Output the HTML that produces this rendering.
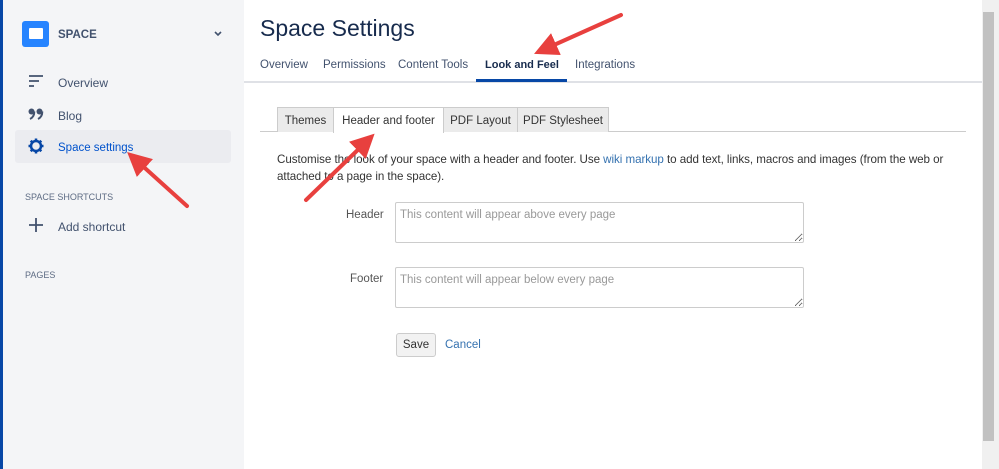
<!DOCTYPE html>
<html><head><style>
*{margin:0;padding:0;box-sizing:border-box}
body{width:999px;height:469px;overflow:hidden;background:#fff;font-family:"Liberation Sans",sans-serif;position:relative;color:#333}
.a{position:absolute;white-space:nowrap}
#side{position:absolute;left:0;top:0;width:244px;height:469px;background:#f4f5f7;border-left:3px solid #0747a6}
.nav{font-size:12px;color:#42526e}
.t{font-size:11.5px;color:#42526e}
.tab{position:absolute;top:107px;height:25px;border:1px solid #ccc;border-bottom:none;background:#ebebeb;font-size:11.5px;color:#333;text-align:center;line-height:27px}
textarea{position:absolute;border:1px solid #ccc;border-radius:2px;font-family:"Liberation Sans",sans-serif;font-size:11.5px;color:#999;padding:6px 4px;resize:both;background:#fff}
</style></head><body>
<div id="side">
  <div class="a" style="left:19px;top:21px;width:27px;height:26px;background:#2684ff;border-radius:3px"></div>
  <div class="a" style="left:26px;top:28px;width:14px;height:11px;background:#fff;border-radius:1px"></div>
  <div class="a" style="left:55px;top:29px;font-size:11.5px;font-weight:bold;color:#42526e">SPACE</div>
  <svg class="a" style="left:211px;top:31px" width="8" height="6"><path d="M1 1l3 3 3-3" stroke="#42526e" stroke-width="1.6" fill="none"/></svg>
  <svg class="a" style="left:25px;top:74px" width="16" height="14"><path d="M1 2h14M1 7h10M1 12h5" stroke="#42526e" stroke-width="1.8"/></svg>
  <div class="a nav" style="left:55px;top:76px">Overview</div>
  <svg class="a" style="left:25px;top:108px" width="16" height="12" viewBox="0 0 16 12"><circle cx="3.5" cy="3.5" r="3" fill="#42526e"/><path d="M6.3 3.5Q6.3 9 2 11" stroke="#42526e" stroke-width="2" fill="none"/><circle cx="11.5" cy="3.5" r="3" fill="#42526e"/><path d="M14.3 3.5Q14.3 9 10 11" stroke="#42526e" stroke-width="2" fill="none"/></svg>
  <div class="a nav" style="left:55px;top:109px">Blog</div>
  <div class="a" style="left:12px;top:130px;width:216px;height:33px;background:#ebecf0;border-radius:3px"></div>
  <svg class="a" style="left:25px;top:138px" width="16" height="16" viewBox="0 0 16 16"><circle cx="8" cy="8" r="5" fill="none" stroke="#0747a6" stroke-width="2.5"/><path d="M8 0.5v3M8 12.5v3M0.5 8h3M12.5 8h3M2.7 2.7l2.1 2.1M11.2 11.2l2.1 2.1M2.7 13.3l2.1-2.1M11.2 4.8l2.1-2.1" stroke="#0747a6" stroke-width="2.5"/></svg>
  <div class="a nav" style="left:55px;top:142px;color:#0052cc;font-size:11.5px">Space settings</div>
  <div class="a" style="left:22px;top:192px;font-size:9px;color:#5e6c84">SPACE SHORTCUTS</div>
  <svg class="a" style="left:25px;top:217px" width="16" height="16"><path d="M8 1v14M1 8h14" stroke="#42526e" stroke-width="1.8"/></svg>
  <div class="a nav" style="left:55px;top:220px">Add shortcut</div>
  <div class="a" style="left:22px;top:270px;font-size:9px;color:#5e6c84">PAGES</div>
</div>
<div class="a" style="left:260px;top:15px;font-size:23px;color:#172b4d">Space Settings</div>
<div class="a t" style="left:260px;top:59px">Overview</div>
<div class="a t" style="left:323px;top:59px">Permissions</div>
<div class="a t" style="left:398px;top:59px">Content Tools</div>
<div class="a t" style="left:485px;top:59px;font-weight:bold;color:#172b4d;font-size:11px">Look and Feel</div>
<div class="a t" style="left:575px;top:59px">Integrations</div>
<div class="a" style="left:244px;top:81px;width:738px;height:2px;background:#dfe1e6"></div>
<div class="a" style="left:476px;top:79px;width:91px;height:3px;background:#0747a6"></div>
<div class="a" style="left:260px;top:131px;width:706px;height:1px;background:#ccc"></div>
<div class="tab" style="left:277px;width:57px">Themes</div>
<div class="tab" style="left:333px;width:111px;background:#fff;height:26px">Header and footer</div>
<div class="tab" style="left:443px;width:75px">PDF Layout</div>
<div class="tab" style="left:517px;width:92px">PDF Stylesheet</div>
<div class="a" style="left:277px;top:151px;font-size:11.6px;line-height:17px;color:#333;letter-spacing:-0.05px">Customise the look of your space with a header and footer. Use <span style="color:#3572b0">wiki markup</span> to add text, links, macros and images (from the web or<br>attached to a page in the space).</div>
<div class="a" style="left:346px;top:209px;font-size:11.5px;color:#555">Header</div>
<textarea style="left:395px;top:202px;width:409px;height:41px">This content will appear above every page</textarea>
<div class="a" style="left:350px;top:273px;font-size:11.5px;color:#555">Footer</div>
<textarea style="left:395px;top:267px;width:409px;height:41px">This content will appear below every page</textarea>
<div class="a" style="left:396px;top:333px;width:40px;height:24px;border:1px solid #ccc;border-radius:3px;background:#f2f2f2;font-size:11.5px;text-align:center;line-height:22px">Save</div>
<div class="a" style="left:445px;top:339px;font-size:11.5px;color:#3572b0">Cancel</div>
<div class="a" style="left:982px;top:0;width:17px;height:469px;background:#f0f0f0"></div>
<div class="a" style="left:983px;top:12px;width:11px;height:429px;background:#c1c1c1"></div>
<svg class="a" style="left:0;top:0" width="999" height="469">
<defs><marker id="h" markerWidth="6" markerHeight="6" refX="3" refY="3" orient="auto"><path d="M0 0L6 3L0 6z" fill="#e8403e"/></marker></defs>
<g stroke="#e8403e" stroke-width="4" stroke-linecap="round" fill="none" marker-end="url(#h)">
<path d="M621 15L545 49"/><path d="M306 200L366 142"/><path d="M187 206L136 160"/>
</g></svg>
</body></html>
